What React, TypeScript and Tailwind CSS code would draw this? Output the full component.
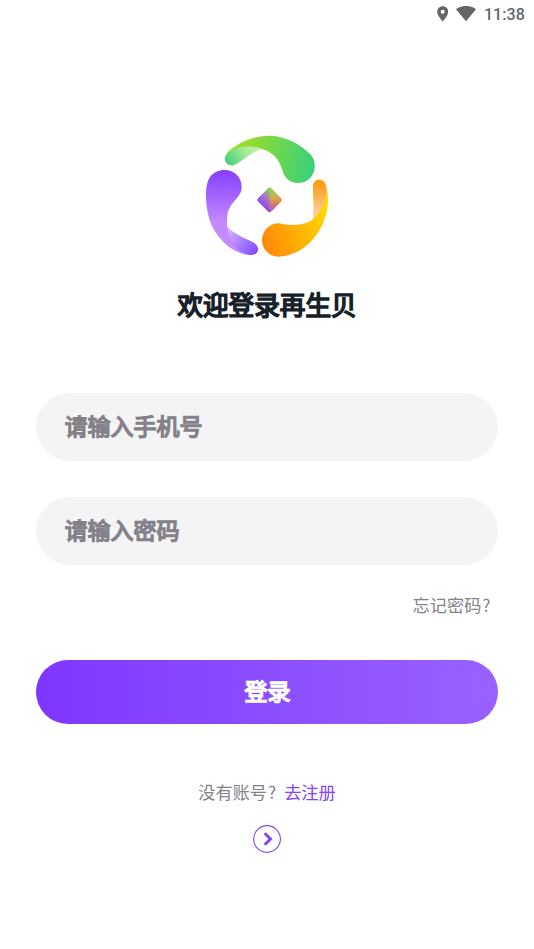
import { useState } from "react";

function StatusBar() {
  return (
    <div className="flex h-7 items-center justify-end pr-[9px] text-[#666]">
      <svg className="mr-[7px] h-4 w-3" viewBox="0 0 12 16" fill="currentColor">
        <path
          fillRule="evenodd"
          d="M5.700.3C2.600.3.2 2.700.2 5.700c0 4 5.500 9.700 5.500 9.700s5.500-5.700 5.500-9.700c0-3-2.400-5.400-5.500-5.400Zm0 7.400a2 2 0 1 1 0-4 2 2 0 0 1 0 4Z"
        />
      </svg>
      <svg className="mr-[8px] h-4 w-5" viewBox="0 0 20 16" fill="currentColor">
        <path d="M10 15.300 0 3.200C3 1 6.300-.1 10-.1s7 1.100 10 3.300Z" />
      </svg>
      <span className="pt-0.5 font-['Roboto',sans-serif] text-base leading-none font-medium tracking-[0.1px]">11:38</span>
    </div>
  );
}

function Logo() {
  return (
    <svg className="h-[140px] w-[140px]" viewBox="0 0 420 420">
      <defs>
        <linearGradient id="green" x1="84" y1="90" x2="353" y2="130" gradientUnits="userSpaceOnUse">
          <stop offset="0" stopColor="#a2e020" />
          <stop offset="0.3" stopColor="#8edb32" />
          <stop offset="1" stopColor="#36d17d" />
        </linearGradient>
        <linearGradient id="greenTip" x1="180" y1="55" x2="92" y2="110" gradientUnits="userSpaceOnUse">
          <stop offset="0" stopColor="#c5f3a5" />
          <stop offset="0.45" stopColor="#a0e891" />
          <stop offset="1" stopColor="#45d37f" />
        </linearGradient>
        <linearGradient id="purple" x1="80" y1="132" x2="80" y2="290" gradientUnits="userSpaceOnUse">
          <stop offset="0" stopColor="#843eff" />
          <stop offset="1" stopColor="#c58aff" />
        </linearGradient>
        <linearGradient id="purpleTip" x1="92" y1="315" x2="175" y2="375" gradientUnits="userSpaceOnUse">
          <stop offset="0" stopColor="#d2b0ff" />
          <stop offset="1" stopColor="#8450ff" />
        </linearGradient>
        <linearGradient id="orange" x1="200" y1="345" x2="390" y2="260" gradientUnits="userSpaceOnUse">
          <stop offset="0" stopColor="#ff8a0a" />
          <stop offset="1" stopColor="#ffd900" />
        </linearGradient>
        <linearGradient id="orangeTip" x1="367" y1="170" x2="357" y2="270" gradientUnits="userSpaceOnUse">
          <stop offset="0" stopColor="#ff9a18" />
          <stop offset="1" stopColor="#ffd2a8" />
        </linearGradient>
        <linearGradient id="gemLeft" x1="182" y1="230" x2="218" y2="190" gradientUnits="userSpaceOnUse">
          <stop offset="0" stopColor="#8b42f4" />
          <stop offset="0.5" stopColor="#a576c8" />
          <stop offset="1" stopColor="#8fca61" />
        </linearGradient>
        <linearGradient id="gemRight" x1="222" y1="188" x2="222" y2="255" gradientUnits="userSpaceOnUse">
          <stop offset="0" stopColor="#8ed554" />
          <stop offset="0.45" stopColor="#dba54c" />
          <stop offset="0.7" stopColor="#d47769" />
          <stop offset="1" stopColor="#bd5eb0" />
        </linearGradient>
        <clipPath id="gem">
          <rect x="190" y="193.500" width="56" height="56" rx="7" transform="rotate(45 218 221.500)" />
        </clipPath>
      </defs>
      <path
        fill="url(#green)"
        d="M84 97C86 79 101 69 118 59C150 38 185 29 220 29C266 31 310 53 342 87C352 99 354 112 353 125C351 151 330 171 303 171C278 171 262 155 256 132C248 104 225 70 185 69C160 75 135 105 110 117C95 121 83 110 84 97Z"
      />
      <path
        fill="url(#greenTip)"
        d="M84 97C86 83 102 71 128 64C152 58 180 62 195 69C166 75 140 105 110 117C95 121 83 110 84 97Z"
      />
      <path
        fill="url(#purple)"
        d="M27 205C27 180 32 164 39 153C49 139 65 132 83 132C112 132 134 154 134 182C134 199 126 210 115 222C98 240 90 258 90 280L91 303C105 321 145 338 168 349C190 360 187 384 165 387C117 388 70 350 45 300C32 270 27 240 27 205Z"
      />
      <path
        fill="url(#purpleTip)"
        d="M91 303C105 321 145 338 168 349C190 360 187 384 165 387C150 387 139 382 127 375C105 354 95 334 91 303Z"
      />
      <path
        fill="url(#orange)"
        d="M348 185C347 170 355 161 367 161C379 161 386 170 388 183C391 196 394 210 393 226C391 302 334 388 245 392C217 392 195 370 195 343C195 315 218 291 247 292C278 300 318 299 347 281C354 244 348 220 348 185Z"
      />
      <path
        fill="url(#orangeTip)"
        d="M348 185C347 170 355 161 367 161C379 161 386 170 388 185C390 215 382 246 347 281C354 244 348 220 348 185Z"
      />
      <g clipPath="url(#gem)">
        <path fill="url(#gemLeft)" d="M178 180H219V262H178Z" />
        <path fill="url(#gemRight)" d="M218 180H260V262H218Z" />
      </g>
    </svg>
  );
}

const fieldClass =
  "h-[67.5px] w-full rounded-full bg-[#f4f4f4] px-[28.5px] pb-[5px] text-[23px] text-[#84818a] outline-none placeholder:text-[#84818a] placeholder:opacity-100 [-webkit-text-stroke:1.4px_#84818a]";

export default function App() {
  const [phone, setPhone] = useState("");
  const [password, setPassword] = useState("");

  return (
    <div className="h-[949px] w-full overflow-hidden bg-white font-['Noto_Sans_CJK_SC',sans-serif]">
      <StatusBar />
      <main className="flex flex-col items-center px-9 pt-[98px]">
        <Logo />
        <h1 className="mt-[19px] text-[25.6px] leading-[38px] text-[#17212a] [-webkit-text-stroke:1.6px_#17212a]">
          欢迎登录再生贝
        </h1>

        <form className="mt-[70.4px] flex w-full flex-col" onSubmit={(e) => e.preventDefault()}>
          <input
            className={fieldClass}
            type="tel"
            placeholder="请输入手机号"
            value={phone}
            onChange={(e) => setPhone(e.target.value)}
          />
          <input
            className={`${fieldClass} mt-[36.5px]`}
            type="password"
            placeholder="请输入密码"
            value={password}
            onChange={(e) => setPassword(e.target.value)}
          />
          <button type="button" className="mt-[27px] mr-[7.500px] self-end text-[17.2px] leading-[26px] text-[#84818a]">
            忘记密码<span className="pl-px">?</span>
          </button>
          <button
            type="submit"
            className="mt-[42px] h-16 w-full rounded-full bg-linear-to-r from-[#7f35ff] to-[#9961ff] pb-[3px] pl-px text-[23px] text-white [-webkit-text-stroke:1.5px_#fff]"
          >
            登录
          </button>
        </form>

        <div className="mt-[55px] flex items-center text-[17.2px] leading-[26px]">
          <span className="mr-[8px] text-[#84818a]">
            没有账号<span className="pl-px">?</span>
          </span>
          <button className="text-[#8444f6]">去注册</button>
        </div>
        <button className="mt-5 h-7 w-7" aria-label="去注册">
          <svg viewBox="0 0 28 28" fill="none" stroke="#8444f6">
            <circle cx="14" cy="14" r="13.400" strokeWidth="1.100" />
            <path d="M11.700 8.200 17.500 14 11.700 19.800" strokeWidth="3" />
          </svg>
        </button>
      </main>
    </div>
  );
}
